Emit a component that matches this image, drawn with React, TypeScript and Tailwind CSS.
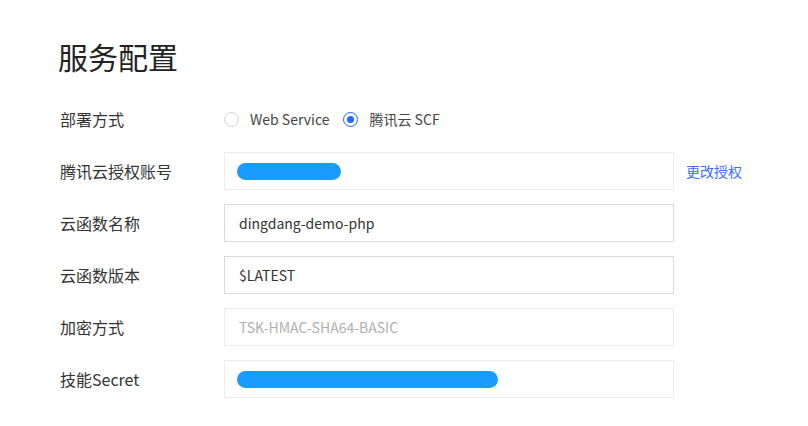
import type { ReactNode } from "react";

const FONT = "font-['Microsoft_YaHei','Noto_Sans_CJK_SC',sans-serif]";

function Row({ label, children, extra }: { label: string; children: ReactNode; extra?: ReactNode }) {
  return (
    <div className="flex items-center h-[38px]">
      <div className="w-[164px] text-[16px] text-[#333]">{label}</div>
      <div className="w-[450px]">{children}</div>
      {extra}
    </div>
  );
}

function Radio({ checked, label }: { checked?: boolean; label: string }) {
  return (
    <label className="flex items-center gap-[11px] text-[14px] text-[#444]">
      <span
        className={`flex h-[15px] w-[15px] items-center justify-center rounded-full border ${
          checked ? "border-[#1d6bff]" : "border-[#d4d4d4]"
        }`}
      >
        {checked && <span className="h-[7px] w-[7px] rounded-full bg-[#1d6bff]" />}
      </span>
      {label}
    </label>
  );
}

function Redacted({ width }: { width: number }) {
  return (
    <div className="h-[38px] border border-[#ececec] bg-white px-[12px] flex items-center">
      <div className="h-[17px] rounded-full bg-[#1a9bff]" style={{ width }} />
    </div>
  );
}

export default function App() {
  return (
    <div className={`${FONT} bg-white w-[808px] h-[426px] pl-[58px] pt-[36px]`}>
      <h1 className="text-[30px] leading-[40px] text-[#222]">服务配置</h1>

      <div className="mt-[29px] flex flex-col pl-[2px]">
        <div className="flex items-center h-[28px]">
          <div className="w-[164px] text-[16px] text-[#333]">部署方式</div>
          <div className="flex items-center gap-[14px]">
            <Radio label="Web Service" />
            <Radio checked label="腾讯云 SCF" />
          </div>
        </div>

        <div className="flex flex-col gap-[14px] mt-[19px]">
          <Row
            label="腾讯云授权账号"
            extra={<a className="ml-[12px] text-[14px] text-[#3d6cff]">更改授权</a>}
          >
            <Redacted width={104} />
          </Row>
          <Row label="云函数名称">
            <div className="h-[38px] border border-[#d9d9d9] px-[14px] flex items-center text-[14px] text-[#333]">
              dingdang-demo-php
            </div>
          </Row>
          <Row label="云函数版本">
            <div className="h-[38px] border border-[#d9d9d9] px-[14px] flex items-center text-[14px] text-[#333]">
              $LATEST
            </div>
          </Row>
          <Row label="加密方式">
            <div className="h-[38px] border border-[#ececec] px-[14px] flex items-center text-[14px] text-[#b0b0b0]">
              TSK-HMAC-SHA64-BASIC
            </div>
          </Row>
          <Row label="技能Secret">
            <Redacted width={261} />
          </Row>
        </div>
      </div>
    </div>
  );
}
